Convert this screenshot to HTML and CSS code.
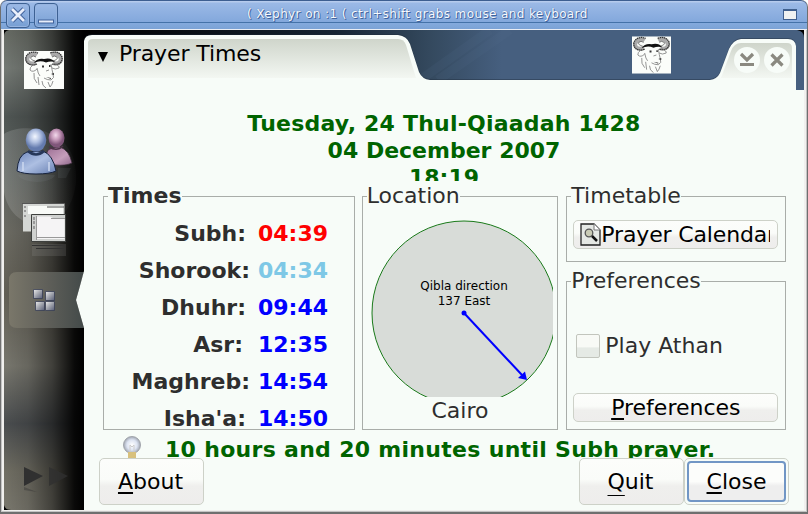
FILE: index.html
```html
<!DOCTYPE html>
<html lang="en">
<head>
<meta charset="utf-8">
<title>Prayer Times</title>
<link rel="stylesheet" href="styles.css">
</head>
<body>
<svg class="defs" width="0" height="0" aria-hidden="true">
  <defs>
    <symbol id="gnu" viewBox="0 0 40 38">
      <rect width="40" height="38" fill="#fbfdfa"/>
      <path d="M12 12C4 14 2 9 4 6C6 3 10 2 13 4M29 12C36 14 38 9 36 6C34 3 31 2 27 4" fill="none" stroke="#aaa" stroke-width="4"/>
      <path d="M13 13C5 16 1 11 2 6C4 1 10 0 14 2M28 13C35 15 39 11 38 6C36 1 31 0 26 2" fill="none" stroke="#333" stroke-width="1.300" stroke-dasharray="1.500 .6"/>
      <path d="M11 10C8 9 6 8 7 6Q9 4 12 6M29 10C32 9 34 8 33 6Q30 4 28 6" fill="none" stroke="#555" stroke-width=".8"/>
      <path d="M10 12Q13 7 20 8Q27 6 31 11Q26 10 22 11.500Q16 9 10 12Z" fill="#111"/>
      <path d="M10 13Q5 17 6 19Q9 22 13 18M30 12Q36 15 35 17Q31 19 28 17M13 17Q14 23 16 25M27 13Q28 19 29 23Q31 27 27 29Q23 29 20 27M22 20L25 19M10 22Q9 28 13 32M14 26L15 34M18 30Q18 35 22 37M24 31L26 36M29 30Q28 34 26 36" fill="none" stroke="#777" stroke-width=".8"/>
      <path d="M18 14.500h2v2h-2zM25 14h1.500v2H25zM27 23l3-1v2zM22 26l5 1v1z" fill="#333"/>
    </symbol>
    <linearGradient id="tab" x2="0" y2="1"><stop stop-color="#cfd5cb"/><stop offset="1" stop-color="#f3f7f2"/></linearGradient>
    <linearGradient id="sky" x1="0" x2="1"><stop stop-color="#000"/><stop offset=".35" stop-color="#152432"/><stop offset=".48" stop-color="#34495e"/><stop offset=".58" stop-color="#465f7f"/><stop offset="1" stop-color="#465f7f"/></linearGradient>
    <radialGradient id="headB" cx=".45" cy=".35"><stop stop-color="#f3f7ff"/><stop offset=".5" stop-color="#b3c2e2"/><stop offset="1" stop-color="#647bae"/></radialGradient>
    <radialGradient id="headP" cx=".45" cy=".35"><stop stop-color="#f2d9eb"/><stop offset=".5" stop-color="#c79bbb"/><stop offset="1" stop-color="#80567a"/></radialGradient>
    <linearGradient id="bodyB" x2="1" y2="1"><stop stop-color="#6d85bc"/><stop offset=".5" stop-color="#adbfe2"/><stop offset="1" stop-color="#667eb1"/></linearGradient>
    <linearGradient id="bodyP" x2="1" y2="1"><stop stop-color="#9a6c92"/><stop offset=".6" stop-color="#c59ebb"/><stop offset="1" stop-color="#8d668a"/></linearGradient>
    <linearGradient id="cube" x2="1" y2="1"><stop stop-color="#eee"/><stop offset=".5" stop-color="#a0a3ac"/><stop offset="1" stop-color="#555b75"/></linearGradient>
    <radialGradient id="bulb"><stop stop-color="#fff"/><stop offset=".6" stop-color="#dde4f2"/><stop offset="1" stop-color="#a0a6b2"/></radialGradient>
  </defs>
</svg>
<div class="window">
  <header class="titlebar">
    <span class="wbtn"><svg width="24" height="24"><path d="M6 6L18 18M18 6L6 18" stroke="#41639c" stroke-width="4.600"/><path d="M6 6L18 18M18 6L6 18" stroke="#e8eefa" stroke-width="2.800"/></svg></span>
    <span class="wbtn"><svg width="24" height="24"><path d="M4 16.500H20V20.500H4Z" fill="#41639c"/><path d="M5 17.500H19V19.500H5Z" fill="#e8eefa"/></svg></span>
    <h1 class="wtitle">( Xephyr on :1 ( ctrl+shift grabs mouse and keyboard</h1>
    <i class="wmax"></i>
  </header>
  <div class="screen">
    <nav class="side">
      <svg width="80" height="480" viewBox="4 30 80 480">
        <defs>
          <linearGradient id="sv" x2="0" y2="1"><stop stop-color="#666a63"/><stop offset=".08" stop-color="#747974"/><stop offset=".18" stop-color="#505654"/><stop offset=".3" stop-color="#5e635f"/><stop offset=".42" stop-color="#6c6b63"/><stop offset=".55" stop-color="#625f55"/><stop offset=".7" stop-color="#78776e"/><stop offset=".82" stop-color="#4a4d4f"/><stop offset=".92" stop-color="#706e63"/><stop offset="1" stop-color="#7a786e"/></linearGradient>
          <linearGradient id="sh"><stop stop-color="#000" stop-opacity="0"/><stop offset=".3" stop-color="#000" stop-opacity=".14"/><stop offset=".6" stop-color="#000" stop-opacity=".46"/><stop offset=".88" stop-color="#000" stop-opacity=".92"/><stop offset="1" stop-color="#000"/></linearGradient>
          <linearGradient id="sel"><stop stop-color="#7a776a"/><stop offset=".5" stop-color="#60605a"/><stop offset="1" stop-color="#434a49"/></linearGradient>
          <linearGradient id="fade"><stop stop-color="#fff" stop-opacity=".15"/><stop offset="1" stop-color="#fff" stop-opacity=".02"/></linearGradient>
        </defs>
        <path d="M4 30h80v480H4z" fill="#000"/>
        <path d="M84 30H9Q4 31 4 36V505Q5 510 11 510H84Z" fill="url(#sv)"/>
        <path d="M4 30h80v480H4z" fill="url(#sh)"/>
        <path d="M4 134C15 127 36 126 50 134C70 142 77 159 76 182C74 204 62 223 42 226C20 225 7 210 4 192Z" fill="url(#fade)"/>
        <use href="#gnu" x="24" y="51" width="40" height="38"/>
        <path d="M48 150Q52 147 60 147Q69 150 72 163Q66 166 55 165L46 155Z" fill="url(#bodyP)" stroke="#3b2b3a" stroke-width=".7"/>
        <ellipse cx="56.500" cy="138" rx="8" ry="9.500" fill="url(#headP)"/>
        <path d="M49 147Q57 152 63 146" fill="none" stroke="#4b3147" stroke-width="1.500"/>
        <path d="M17 171Q18 155 27 152L43 151Q53 155 56 171Q50 174 36 174Q23 174 17 171Z" fill="url(#bodyB)" stroke="#17233e" stroke-width="1"/>
        <path d="M28 151Q36 158 44 151" fill="none" stroke="#263759" stroke-width="2.500"/>
        <ellipse cx="36" cy="140" rx="10.300" ry="11.500" fill="url(#headB)"/>
        <path d="M23 162V171M49 162V171" stroke="#cdd8ef" stroke-width="1.500"/>
        <path d="M18 175h37q-2 6-18 7-16-1-19-7zM58 168h13l-5 10h-8z" fill="#b8bec8" opacity=".08"/>
        <path d="M23 203.500H64.500V216H31V231.500H23Z" fill="#d5d7d4"/>
        <path d="M28 206H63V214H28Z" fill="#f8faf7"/><path d="M22 203.500H65M47 207H64" stroke="#555" stroke-width="1"/>
        <path d="M24 206h2v2h-2zM24 210h2v2h-2zM24 215h2v2h-2z" fill="#999"/>
        <path d="M31.500 214.500H65.500V241.500H31.500Z" fill="#d0d2d0" stroke="#3e403e"/>
        <path d="M36 216.500H50L54 218.500H64.500V239H36Z" fill="#f5f4f5"/>
        <path d="M36.500 216V240M36 237.500H65M51 218.500H65" stroke="#999" fill="none"/>
        <path d="M33 217h2v3h-2zM33 221h2v3h-2zM33 226h2v3h-2z" fill="#999"/>
        <path d="M32 244h34v12h-34z" fill="#aaa" opacity=".16"/><path d="M32 245.500H65M36 248.500H65" stroke="#333"/>
        <path d="M17 272H84Q80 286 76 300Q80 314 84 328H17Q9 328 9 320V280Q9 272 17 272Z" fill="url(#sel)"/>
        <path d="M84 271Q80 286 76 300Q80 314 84 328Z" fill="#f7fcf8"/>
        <g fill="url(#cube)" stroke="#393f54" stroke-width=".8"><path d="M33.500 289.500h9v9h-9z"/><path d="M45.500 291.500h9v9h-9z"/><path d="M35.500 301.500h9v9h-9z"/><path d="M45.500 301.500h9v9h-9z"/></g>
        <path d="M24 467L43 476L24 486Z" fill="#303030"/><path d="M49 467L68 476L49 486Z" fill="#303030" opacity=".8"/><path d="M24 487l13 5-13-2z" fill="#333" opacity=".4"/>
      </svg>
    </nav>
    <main class="app">
      <div class="tabs">
        <svg class="tabsbg" width="720" height="60" viewBox="84 30 720 60">
          <path d="M84 30H804V90H84Z" fill="#000"/>
          <path d="M84 30H797Q804 31 804 38V90H84Z" fill="url(#sky)"/>
          <path d="M420 80L490 30M438 80L510 30" stroke="#56708f" stroke-width="9" opacity=".13"/>
          <path d="M84 90V41Q85 35 92 35H398Q407 36 410 44L419 72Q422 79 430 80H710Q717 79 720 73L729 49Q733 40 741 39H788Q795 39 796 46V90Z" fill="#1d2b3a" opacity=".4" transform="translate(0 -1)"/>
          <path d="M84 90V41Q85 35 92 35H398Q407 36 410 44L419 72Q422 79 430 80H710Q717 79 720 73L729 49Q733 40 741 39H788Q795 39 796 46V90Z" fill="#f7fcf8"/>
          <path d="M88 78V43Q88 39 93 39H398Q404 39 406 45L416 78Z" fill="url(#tab)"/>
          <path d="M721 78L731 51Q734 43 741 43H787Q792 43 792 48V78Z" fill="url(#tab)"/>
          <path d="M98 52H108L103 62Z" fill="#000"/>
          <use href="#gnu" x="632" y="36" width="39" height="38"/>
          <circle cx="747" cy="60" r="13" fill="#f7fcf8"/><circle cx="777" cy="60" r="13" fill="#f7fcf8"/>
          <path d="M741 54L747 60L753 54M740 64.500H754M771.500 54.500L782.500 65.500M782.500 54.500L771.500 65.500" fill="none" stroke="#8a8980" stroke-width="3.200"/>
        </svg>
        <h2 class="apptitle">Prayer Times</h2>
      </div>
      <section class="dates"><p class="d1">Tuesday, 24 Thul-Qiaadah 1428</p><p class="d2">04 December 2007</p><p class="d3">18:19</p></section>
      <div class="panels">
        <section class="frame times"><h3 class="legend bold">Times</h3>
          <dl class="list">
            <dt class="n1">Subh:</dt><dd class="red">04:39</dd>
            <dt class="n2">Shorook:</dt><dd class="sky">04:34</dd>
            <dt class="n3">Dhuhr:</dt><dd>09:44</dd>
            <dt class="n4">Asr:</dt><dd>12:35</dd>
            <dt class="n5">Maghreb:</dt><dd>14:54</dd>
            <dt class="n6">Isha'a:</dt><dd>14:50</dd>
          </dl>
        </section>
        <section class="frame location"><h3 class="legend">Location</h3>
          <svg class="compass" width="182" height="178" viewBox="371 219 182 178">
            <circle cx="464" cy="313" r="92" fill="#d8dcd8" stroke="#1a7a1a" stroke-width="1"/>
            <path d="M464 313L522 375" stroke="#00f" stroke-width="2"/><circle cx="464" cy="313" r="2.500" fill="#00f"/><path d="M527 380L518 378L525 371.500Z" fill="#00f"/>
            <text x="464" y="290" text-anchor="middle" class="qibla">Qibla direction</text><text x="464" y="305" text-anchor="middle" class="qibla">137 East</text>
          </svg>
          <p class="city">Cairo</p>
        </section>
        <div class="right">
          <section class="frame timetable"><h3 class="legend">Timetable</h3>
            <button class="small cal"><svg width="21" height="24" viewBox="0 0 21 24"><path d="M1 1H14L20 7V22H1Z" fill="#e5e8e4" stroke="#222" stroke-width="1.300"/><path d="M14 1V7H20" fill="#fff" stroke="#777"/><circle cx="9" cy="10" r="3.800" fill="#c9cbb5" stroke="#555" stroke-width="1.300"/><path d="M12 13L17 18" stroke="#111" stroke-width="2.500"/></svg><span>Prayer Calendar</span></button>
          </section>
          <section class="frame prefs"><h3 class="legend">Preferences</h3>
            <label class="check"><i class="box"></i><span>Play Athan</span></label>
            <button class="small pref"><span><u>P</u>references</span></button>
          </section>
        </div>
      </div>
      <div class="status"><svg width="20" height="22" viewBox="0 0 20 22"><circle cx="10" cy="9" r="8.500" fill="url(#bulb)" stroke="#a2a6ac"/><path d="M8 9V16M12 9V16M8 9L10 11L12 9" fill="none" stroke="#ccc"/><path d="M6 16H14V22H6Z" fill="#d8c17d"/></svg><p>10 hours and 20 minutes until Subh prayer.</p></div>
      <footer class="actions"><button class="big about"><u>A</u>bout</button><button class="big quit"><u>Q</u>uit</button><button class="big close"><span><u>C</u>lose</span></button></footer>
    </main>
  </div>
</div>
</body>
</html>
```
FILE: styles.css
```css
* { box-sizing: border-box; margin: 0; padding: 0; }
body { width: 808px; height: 514px; overflow: hidden; background: #fff; font: 22px/27px "DejaVu Sans", sans-serif; color: #2e2e2e; }
svg { display: block; flex: none; }
.defs { position: absolute; }
.window { width: 808px; height: 514px; background: #f1f0ee; border: solid #6f6f6f; border-width: 0 1px 2px; border-radius: 7px 7px 0 0; overflow: hidden; box-shadow: inset 0 0 0 1px #c4c4c4; }
.titlebar { height: 30px; margin: 0 -1px; padding: 0 10px 0 5px; border: solid #3d5e91; border-width: 1px 1px 0; border-bottom: 1px solid #e9edf4; border-radius: 7px 7px 0 0; background: linear-gradient(#b6cbed 0 1px, #9bb9e6 2px, #83a8dc 21px, #4472a8 21px 22px, #84aadd 22px, #7ba2d5 28px); display: flex; align-items: flex-start; }
.wbtn { width: 24px; height: 25px; margin: 2px 4px 0 0; border: 1px solid #3d6193; border-radius: 4px; background: linear-gradient(#9bb9e6, #779fd3); box-shadow: inset 0 0 0 1px #96b4e0; overflow: hidden; }
.wbtn svg { margin: -1px; }
.wtitle { flex: 1; padding: 3px 0 0 185px; font: 12px/20px "DejaVu Sans", sans-serif; letter-spacing: .39px; color: #f7faff; text-shadow: 1px 1px 0 #41639c, 0 0 1px #41639c; white-space: nowrap; }
.wmax { width: 14px; height: 11px; margin-top: 8px; border: 1px solid #3f5f8e; border-top-width: 2px; background: #f0f2f2; }
.screen { width: 800px; height: 480px; margin-left: 3px; display: flex; overflow: hidden; }
.side { width: 80px; }
.app { width: 720px; background: #f7fcf8; display: flex; flex-direction: column; }
.tabs { height: 60px; display: grid; flex: none; }
.tabsbg, .apptitle { grid-area: 1 / 1; }
.apptitle { font-weight: 400; color: #000; padding: 10px 0 0 35px; font-size: 22px; letter-spacing: -.1px; z-index: 1; }
.dates { height: 91px; flex: none; padding-top: 20px; overflow: hidden; text-align: center; font-weight: 700; color: #006400; }
.dates p { height: 27px; }
.d1 { letter-spacing: .21px; }
.panels { display: flex; height: 248px; flex: none; padding: 2px 18px 0 19px; gap: 7px; align-items: flex-start; }
.frame { border: 1px solid #a9ada9; display: flex; flex-direction: column; height: 234px; margin-top: 13px; min-width: 0; }
.legend { font-size: 22px; font-weight: 400; line-height: 27px; margin: -15px 0 0 4px; align-self: flex-start; background: #f7fcf8; height: 27px; }
.bold { font-weight: 700; }
.times { width: 252px; }
.list { display: grid; grid-template-columns: 146px 1fr; grid-auto-rows: 37px; padding-top: 11px; column-gap: 8px; font-weight: 700; height: 220px; }
dt { text-align: right; } dd { color: #00f; }
.n1, .n3, .n6 { padding-right: 4px; } .n4 { padding-right: 7px; }
.red { color: #f00; } .sky { color: #7ec8e6; }
.location { width: 197px; align-items: center; }
.compass { margin: 10px 0 0 4px; }
.qibla { font-size: 12px; fill: #000; }
.right { width: 220px; margin-left: 1px; }
.timetable { height: 66px; } .prefs { height: 149px; margin-top: 19px; }
button { font: inherit; color: #000; background: linear-gradient(#fcfdfb, #fafcf9 45%, #efefed 60%, #eeedec); border: 1px solid #cdd1c8; border-radius: 5px; white-space: nowrap; overflow: hidden; }
u { text-decoration-thickness: 2px; text-underline-offset: 3px; text-decoration-skip-ink: none; }
.small { width: 205px; height: 29px; margin-left: 6px; flex: none; }
.cal { margin-top: 11px; padding: 0 7px 0 6px; display: flex; align-items: center; letter-spacing: -.15px; }
.cal span { overflow: hidden; }
.pref { margin-top: 34px; }
.check { display: flex; align-items: center; gap: 5px; margin: 38px 0 0 9px; height: 27px; }
.box { width: 24px; height: 24px; border: 1px solid #c2c5bd; border-radius: 2px; background: linear-gradient(#f8faf6 0 55%, #e5eae5 58%); }
.status { height: 29px; flex: none; overflow: hidden; display: flex; color: #006400; font-weight: 700; padding: 7px 0 0 38px; gap: 23px; letter-spacing: .3px; }
.status p { white-space: nowrap; }
.actions { height: 48px; flex: none; display: flex; padding: 0 15px; }
.big { height: 47px; width: 105px; flex: none; padding: 0 2px 1px 0; }
.quit { margin-left: auto; }
.quit u { text-decoration-thickness: 1px; text-underline-offset: 6px; }
.close { background: #f7fcf8; padding: 2px; }
.close span { display: block; border: 2px solid #7196c5; border-radius: 4px; height: 41px; line-height: 37px; background: linear-gradient(#fcfdfb 50%, #eee 62%); }
```
